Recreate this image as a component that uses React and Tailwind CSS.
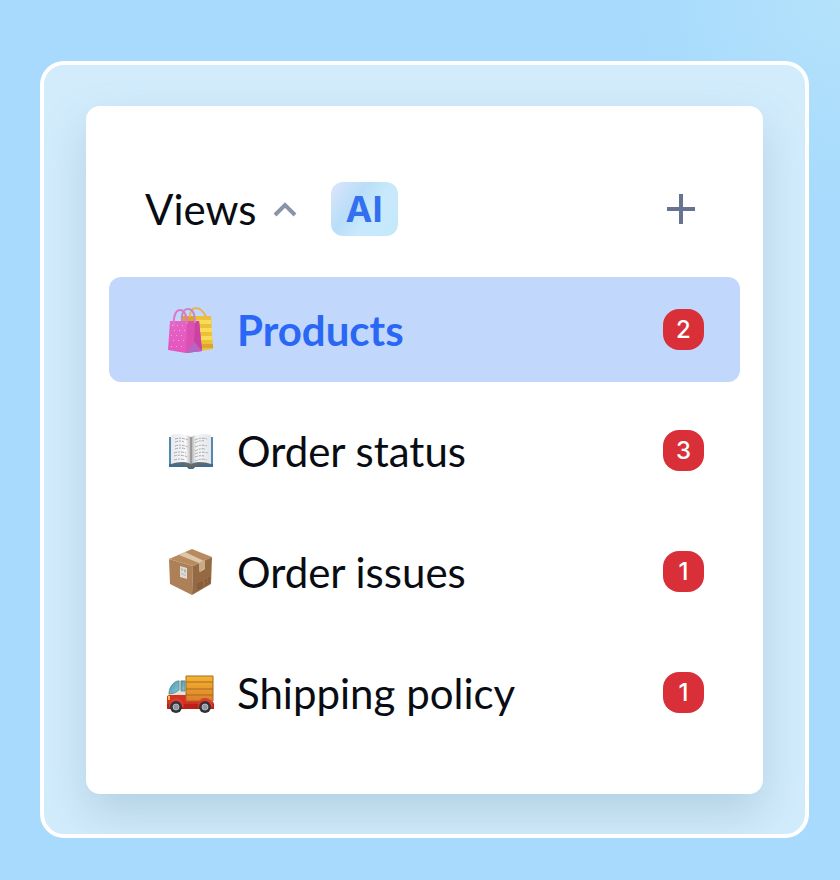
import React, { useState } from "react";

function BagsIcon() {
  return (
    <svg viewBox="0 0 48 48" className="size-12 shrink-0" aria-hidden="true">
      <defs>
        <linearGradient id="pinkBag" x1="0" y1="0" x2="0" y2="1">
          <stop offset="0" stopColor="#e564c6" />
          <stop offset="1" stopColor="#e455bd" />
        </linearGradient>
      </defs>
      {/* yellow bag */}
      <path d="M14 10h30l2 33-12 2-18-4z" fill="#eec03a" />
      <path d="M28 14h16v4H28zm0 8h17v4H28zm0 8h17v4H28z" fill="#f8dc55" />
      <path d="M33 38h13v4H33z" fill="#d9a72e" />
      <path d="M14 10h13v6H14z" fill="#d9a62c" />
      <path d="M23 11C23 4 26 2 29 2s8 3 10 9" fill="none" stroke="#e9b25a" strokeWidth="2" />
      {/* pink bag */}
      <path d="M3 15h29l3 30-16 2-18-3z" fill="url(#pinkBag)" />
      <path d="M20 15h12l3 30-16 2z" fill="#dc50b2" />
      <path d="M28 15h4l3 30-8-9z" fill="#cb43a2" />
      <path d="M19 47l8-11 8 9z" fill="#b566c5" />
      <path
        d="M5 19h1v1H5zm5 0h1v1h-1zm5 0h1v1h-1zM7 24h1v1H7zm5 0h1v1h-1zm5 0h1v1h-1zM4 29h1v1H4zm5 0h1v1H9zm5 0h1v1h-1zM6 34h1v1H6zm5 0h1v1h-1zm5 0h1v1h-1zM4 40h1v1H4zm5 0h1v1H9zm5 0h1v1h-1z"
        fill="#f6a5e0"
      />
      <path d="M7 20C6 10 9 4 13 4s7 5 7 14" fill="none" stroke="#df76ca" strokeWidth="2" />
      <path d="M15 15c-1-8 2-12 6-12s7 4 7 14" fill="none" stroke="#c987bd" strokeWidth="2" />
    </svg>
  );
}

function BookIcon() {
  return (
    <svg viewBox="0 0 48 48" className="size-12 shrink-0" aria-hidden="true">
      <defs>
        <linearGradient id="pageLeft" x1="0" x2="1">
          <stop offset="0" stopColor="#e8eaee" />
          <stop offset=".75" stopColor="#f8f8f9" />
          <stop offset="1" stopColor="#b5b4b3" />
        </linearGradient>
        <linearGradient id="pageRight" x1="0" x2="1">
          <stop offset="0" stopColor="#a8a8a8" />
          <stop offset=".25" stopColor="#f5f5f6" />
          <stop offset="1" stopColor="#e4e7eb" />
        </linearGradient>
      </defs>
      <path d="M2 10h44v30H28l-2 2h-4l-2-2H2z" fill="#5588ae" />
      <path d="M2 37h44v3H28l-2 2h-4l-2-2H2z" fill="#3b6d94" />
      <path d="M4 37c7-2 15-2 20 1 5-3 13-3 20-1v1c-7-1-14 0-18 2h-4c-4-2-11-3-18-2z" fill="#6d6660" />
      <path d="M4 8c7-2 15-1 20 2v27c-6-3-14-2-20 0z" fill="url(#pageLeft)" />
      <path d="M44 8c-7-2-15-1-20 2v27c6-3 14-2 20 0z" fill="url(#pageRight)" />
      <path
        d="M8 12q6-2 13 1M8 15q6-2 9 0M8 19q6-2 13 1M8 22q6-2 11 0M7 26q6-2 12 0M7 29q6-2 14 1M7 33q6-2 11 0M28 13q6-3 12-1M28 16q5-3 9-2M28 20q6-3 12-1M28 24q5-3 10-2M28 27q6-3 13-1M28 30q5-2 9-1M28 34q6-3 12-1"
        fill="none"
        stroke="#a2a6ad"
        strokeWidth="1"
        strokeDasharray="3 1 2 1"
      />
      <path d="M24 10v28" stroke="#817c78" strokeWidth="1" />
    </svg>
  );
}

function BoxIcon() {
  return (
    <svg viewBox="0 0 48 48" className="size-12 shrink-0" aria-hidden="true">
      <path d="M2 11L25 1l20 8-19 9z" fill="#b88a60" />
      <path d="M2 11l24 7-1 29L3 36z" fill="#ae8057" />
      <path d="M26 18L45 9l-1 27-19 11z" fill="#946943" />
      <path d="M12 7l6-3 19 9 1 8-5 3-1-9z" fill="#dcc8a9" />
      <path d="M32 15l6-3v8l-6 4z" fill="#c6ab84" />
      <path d="M13 18l7 2v11l-7-2z" fill="#dedbd6" />
      <path d="M14 20l2 1v2l-2-1zm3 1l2 1v3l-2-1zm-3 4l5 2v1l-5-2z" fill="#b0b6b8" />
      <path
        d="M31 36l4-2v5l-4 2zM33 35v5M39 32v4m-1-3l1-1 1 0m2-2v4m-1-3l1-1 1 0M38 37l5-3"
        fill="none"
        stroke="#7d5736"
        strokeWidth="1"
      />
    </svg>
  );
}

function TruckIcon() {
  return (
    <svg viewBox="0 -6 48 48" className="size-12 shrink-0" aria-hidden="true">
      <defs>
        <linearGradient id="cargo" x1="0" y1="0" x2="0" y2="1">
          <stop offset="0" stopColor="#f5b52f" />
          <stop offset="1" stopColor="#dc7f28" />
        </linearGradient>
        <linearGradient id="glass" x1="0" y1="0" x2="1" y2="1">
          <stop offset="0" stopColor="#4795ab" />
          <stop offset="1" stopColor="#8ac9db" />
        </linearGradient>
      </defs>
      <path d="M7 7q2-2 5-2h8v18H1q0-11 6-16z" fill="#e9e1d3" />
      <path d="M7 8q2-2 5-2v9q-4 4-10 4 0-7 5-11z" fill="url(#glass)" stroke="#4c8290" strokeWidth=".7" />
      <path d="M14 6h4v10h-4z" fill="url(#glass)" stroke="#4c8290" strokeWidth=".7" />
      <path d="M0 22q0-2 3-2h16v6h25q3 0 3 4v4H0z" fill="#d62f23" />
      <path d="M0 29h47v4q0 1-2 1H2q-2 0-2-2z" fill="#bd1f19" />
      <path d="M19 1h27v25H19z" fill="url(#cargo)" stroke="#a66b27" strokeWidth="1" />
      <path d="M19 7h27M19 14h27M19 20h27" stroke="#a66a24" strokeWidth="1" />
      <path d="M1 21h2v4H1z" fill="#ffc43c" />
      <path d="M2 32q0-9 7-9t8 9zM31 32q0-9 7-9t8 9z" fill="#df3a2b" />
      <circle cx="9" cy="32" r="6" fill="#30343a" />
      <circle cx="38" cy="32" r="6" fill="#30343a" />
      <circle cx="9" cy="32" r="3" fill="#8f969e" stroke="#d1d4d7" strokeWidth=".7" />
      <circle cx="38" cy="32" r="3" fill="#8f969e" stroke="#d1d4d7" strokeWidth=".7" />
    </svg>
  );
}

const views = [
  { id: "products", name: "Products", count: 2, Icon: BagsIcon },
  { id: "status", name: "Order status", count: 3, Icon: BookIcon },
  { id: "issues", name: "Order issues", count: 1, Icon: BoxIcon },
  { id: "shipping", name: "Shipping policy", count: 1, Icon: TruckIcon },
];

export default function App() {
  const [selected, setSelected] = useState("products");
  const [open, setOpen] = useState(true);

  return (
    <div className="min-h-screen bg-[#a7dafc] bg-[radial-gradient(circle_at_top_right,#b4e2fb_0,#a7dafc_200px)] pt-[61px] pr-[31px] pb-[42px] pl-10 font-['Lato',sans-serif] text-[#090c12]">
      <main className="overflow-hidden rounded-3xl border-4 border-white bg-[#d2ecfc] px-[42px] pt-[41px] pb-10">
        <section className="rounded-[14px] bg-white px-[23px] pt-[76px] pb-[49px] shadow-[0_20px_44px_rgba(100,140,165,0.28)]">
          {/* Header */}
          <header className="mb-[41px] flex h-[54px] items-center pr-[45px] pl-9">
            <button
              type="button"
              aria-expanded={open}
              onClick={() => setOpen(!open)}
              className="flex items-center gap-4 text-[42px] leading-[54px]"
            >
              Views
              <svg viewBox="0 0 24 16" className={open ? "h-4 w-6" : "h-4 w-6 rotate-180"} aria-hidden="true">
                <path d="M2 14L12 4l10 10" fill="none" stroke="#8a94a8" strokeWidth="4" />
              </svg>
            </button>
            <span className="ml-[34px] flex h-[54px] w-[67px] items-center justify-center rounded-xl bg-[linear-gradient(125deg,#dde5fa_0%,#b9def9_35%,#c9e9fb_60%,#c2e9fa_100%)] font-['Inter',sans-serif] text-4xl font-bold text-[#3370f0]">
              AI
            </span>
            <button type="button" aria-label="Add view" className="ml-auto">
              <svg viewBox="0 0 28 30" className="h-[30px] w-7" aria-hidden="true">
                <path d="M14 0v30M0 15h28" stroke="#667391" strokeWidth="4" />
              </svg>
            </button>
          </header>

          {/* Views list */}
          {open && (
            <ul className="flex flex-col gap-4">
              {views.map(({ id, name, count, Icon }) => (
                <li key={id}>
                  <button
                    type="button"
                    onClick={() => setSelected(id)}
                    className={
                      "flex h-[105px] w-full items-center rounded-xl pr-9 pl-[58px] text-left " +
                      (selected === id ? "bg-[#c2d7fc]" : "")
                    }
                  >
                    <Icon />
                    <span
                      className={
                        "ml-[22px] text-[42px] leading-[54px] " +
                        (selected === id ? "font-bold text-[#2967f4]" : "")
                      }
                    >
                      {name}
                    </span>
                    <span className="ml-auto flex size-[41px] items-center justify-center rounded-2xl bg-[#d92f39] font-['Inter',sans-serif] text-2xl font-medium text-white">
                      {count}
                    </span>
                  </button>
                </li>
              ))}
            </ul>
          )}
        </section>
      </main>
    </div>
  );
}
